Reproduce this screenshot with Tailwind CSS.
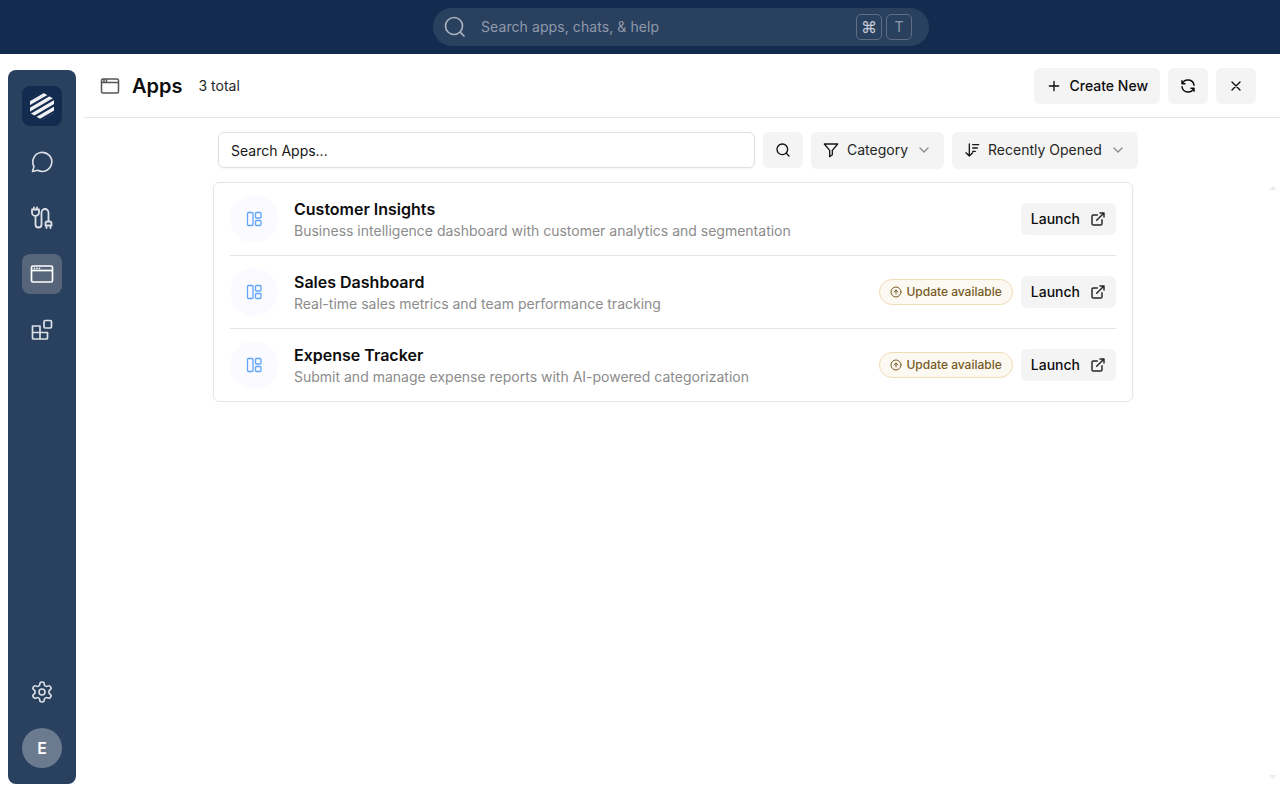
<!doctype html>
<html class="overflow-hidden">
  <head>
    <meta charset="UTF-8" />
    <title>Apps</title>
    <script src="https://cdn.jsdelivr.net/npm/@tailwindcss/browser@4"></script>
  </head>
  <body class="flex h-[800px] w-[1280px] flex-col overflow-hidden bg-white font-['Inter',sans-serif] text-[#0d0d0d]">
    <!-- top bar -->
    <header class="flex h-[54px] shrink-0 items-start justify-center bg-[#132b4f] pl-[82px] pt-2">
      <div class="flex h-[38px] w-[496px] items-center rounded-full bg-[#2a405f] pl-[10px] pr-[17px]">
        <svg class="h-[24px] w-[24px] text-[#a9b2bf]" viewBox="0 0 24 24" fill="none" stroke="currentColor" stroke-width="1.700" stroke-linecap="round"><circle cx="11" cy="11" r="8.500" /><path d="m21 21-3.600-3.600" /></svg>
        <span class="ml-[14px] flex-1 text-sm tracking-[0.08px] text-[#8f9aab]">Search apps, chats, &amp; help</span>
        <span class="flex h-[26px] w-[26px] items-center justify-center rounded-[5px] border border-[#5f6e85] text-base text-[#c4cad3]">⌘</span>
        <span class="ml-[4px] flex h-[26px] w-[26px] items-center justify-center rounded-[5px] border border-[#5f6e85] text-sm text-[#8f9aab]">T</span>
      </div>
    </header>

    <div class="flex min-h-0 flex-1">
      <!-- sidebar -->
      <aside class="mb-4 ml-2 mt-4 flex w-[68px] shrink-0 flex-col items-center rounded-lg bg-[#2a405f] pb-4 pt-4">
        <div class="flex h-10 w-10 items-center justify-center rounded-lg bg-[#132b4f]">
          <svg class="h-[28px] w-[28px]" viewBox="0 0 28 28" fill="none">
            <path d="M14 0 26 7v14l-12 7-12-7V7Z" fill="#eef0f3" />
            <path d="M0 9 28-7.200M0 15.500 28-.700M0 22 28 5.800M0 28.500 28 12.300M0 35 28 18.800" stroke="#132b4f" stroke-width="2.200" />
          </svg>
        </div>
        <div class="mt-4 flex h-10 w-10 items-center justify-center">
          <svg class="h-6 w-6 text-[#dde1e7]" viewBox="0 0 24 24" fill="none" stroke="currentColor" stroke-width="1.600" stroke-linecap="round" stroke-linejoin="round"><path d="M2.500 21.500 4 16.500A9.500 9.500 0 1 1 7.700 20.200Z" /></svg>
        </div>
        <div class="mt-4 flex h-10 w-10 items-center justify-center">
          <svg class="h-6 w-6 text-[#dde1e7]" viewBox="0 0 24 24" fill="none" stroke="currentColor" stroke-width="1.800" stroke-linecap="round" stroke-linejoin="round"><path d="M2 3.500h7v3a3.500 3.500 0 0 1-7 0ZM4 1.500v2M7 1.500v2M5.500 10v8.500a3 3 0 0 0 6 0v-12a3.500 3.500 0 0 1 7 0V15" /><path d="M15.500 19.500v-2a2 2 0 0 1 2-2h2a2 2 0 0 1 2 2v2ZM16.500 19.500v2.500M20.500 19.500v2.500" /></svg>
        </div>
        <div class="mt-4 flex h-10 w-10 items-center justify-center rounded-lg bg-[#566579]">
          <svg class="h-6 w-6 text-white" viewBox="0 0 24 24" fill="none" stroke="currentColor" stroke-width="1.700"><rect x="1.500" y="4" width="21" height="16" rx="1.500" /><path d="M1.500 8.500h21" /><path d="M4.500 6.300h.01M7 6.300h.01M9.500 6.300h.01" stroke-linecap="round" /></svg>
        </div>
        <div class="mt-4 flex h-10 w-10 items-center justify-center">
          <svg class="h-6 w-6 text-[#dde1e7]" viewBox="0 0 24 24" fill="none" stroke="currentColor" stroke-width="1.700" stroke-linejoin="round"><path d="M2.500 8h7.500v13H3.500a1 1 0 0 1-1-1ZM2.500 14.500h15M10 14.500h7.500V20a1 1 0 0 1-1 1H10" /><rect x="14" y="2.500" width="7.500" height="7.500" rx="1.200" /></svg>
        </div>
        <div class="mt-auto flex h-10 w-10 items-center justify-center">
          <svg class="h-6 w-6 text-[#dde1e7]" viewBox="0 0 24 24" fill="none" stroke="currentColor" stroke-width="1.600" stroke-linecap="round" stroke-linejoin="round"><path d="M12.220 2h-.44a2 2 0 0 0-2 2v.18a2 2 0 0 1-1 1.730l-.43.250a2 2 0 0 1-2 0l-.150-.080a2 2 0 0 0-2.730.730l-.220.380a2 2 0 0 0 .730 2.730l.150.100a2 2 0 0 1 1 1.720v.510a2 2 0 0 1-1 1.740l-.150.090a2 2 0 0 0-.730 2.730l.220.380a2 2 0 0 0 2.730.730l.150-.080a2 2 0 0 1 2 0l.430.250a2 2 0 0 1 1 1.730V20a2 2 0 0 0 2 2h.44a2 2 0 0 0 2-2v-.180a2 2 0 0 1 1-1.730l.430-.250a2 2 0 0 1 2 0l.150.080a2 2 0 0 0 2.730-.730l.220-.390a2 2 0 0 0-.730-2.730l-.150-.080a2 2 0 0 1-1-1.740v-.500a2 2 0 0 1 1-1.740l.150-.090a2 2 0 0 0 .730-2.730l-.220-.380a2 2 0 0 0-2.730-.730l-.150.080a2 2 0 0 1-2 0l-.430-.250a2 2 0 0 1-1-1.730V4a2 2 0 0 0-2-2z" /><circle cx="12" cy="12" r="3" /></svg>
        </div>
        <div class="mt-4 flex h-10 w-10 items-center justify-center rounded-full bg-[#6b7a8f] text-base font-semibold text-white">E</div>
      </aside>

      <!-- main -->
      <main class="ml-2 flex min-w-0 flex-1 flex-col">
        <div class="flex h-[64px] shrink-0 items-center border-b border-[#e5e5e5] pl-4 pr-6">
          <svg class="h-[20px] w-[20px] text-[#555555]" viewBox="0 0 20 20" fill="none" stroke="currentColor" stroke-width="1.500"><rect x="1.500" y="3" width="17" height="14" rx="1.500" /><path d="M1.500 6.500h17M4 3v3.500M6.500 3v3.500" /></svg>
          <h1 class="ml-3 text-xl font-semibold">Apps</h1>
          <span class="ml-4 text-sm text-[#262626]">3 total</span>
          <button class="ml-auto flex h-9 items-center gap-2 rounded-md bg-[#f4f4f4] px-3 text-sm font-medium">
            <svg class="h-4 w-4" viewBox="0 0 24 24" fill="none" stroke="currentColor" stroke-width="2" stroke-linecap="round"><path d="M5 12h14M12 5v14" /></svg>
            Create New
          </button>
          <button class="ml-2 flex h-9 w-10 items-center justify-center rounded-md bg-[#f4f4f4]">
            <svg class="h-[18px] w-[18px]" viewBox="0 0 24 24" fill="none" stroke="currentColor" stroke-width="2" stroke-linecap="round" stroke-linejoin="round"><path d="M20 11a8.100 8.100 0 0 0-15.500-2M4 5v4h4M4 13a8.100 8.100 0 0 0 15.500 2M20 19v-4h-4" /></svg>
          </button>
          <button class="ml-2 flex h-9 w-10 items-center justify-center rounded-md bg-[#f4f4f4]">
            <svg class="h-4 w-4" viewBox="0 0 24 24" fill="none" stroke="currentColor" stroke-width="2" stroke-linecap="round"><path d="M18 6 6 18M6 6l12 12" /></svg>
          </button>
        </div>

        <div class="relative min-h-0 flex-1 pr-[18px]">
          <!-- faint scrollbar arrows -->
          <span class="absolute right-[3px] top-[68px] h-0 w-0 border-x-[4px] border-b-[4px] border-x-transparent border-b-[#ececec]"></span>
          <span class="absolute bottom-[21px] right-[3px] h-0 w-0 border-x-[4px] border-t-[4px] border-x-transparent border-t-[#ececec]"></span>

          <div class="mx-auto w-[920px] pt-[14px]">
            <!-- toolbar -->
            <div class="flex items-start whitespace-nowrap pl-[5px]">
              <div class="flex h-9 w-[537px] shrink-0 items-center rounded-md border border-[#e0e0e0] pl-3 pt-[1px] text-sm text-[#171717] shadow-xs">Search Apps...</div>
              <button class="ml-2 flex h-9 w-10 shrink-0 items-center justify-center rounded-md bg-[#f4f4f4]">
                <svg class="h-4 w-4" viewBox="0 0 24 24" fill="none" stroke="currentColor" stroke-width="2" stroke-linecap="round"><circle cx="11" cy="11" r="8" /><path d="m21 21-4.300-4.300" /></svg>
              </button>
              <button class="ml-2 flex h-[37px] shrink-0 items-center rounded-md bg-[#f4f4f4] px-3 pb-[1px] text-sm text-[#262626]">
                <svg class="mr-2 h-[16px] w-[16px]" viewBox="0 0 24 24" fill="none" stroke="#171717" stroke-width="2" stroke-linecap="round" stroke-linejoin="round"><path d="M2 3h20l-8 9.500V19l-4 3v-9.500Z" /></svg>
                Category
                <svg class="ml-2 h-[16px] w-[16px]" viewBox="0 0 24 24" fill="none" stroke="#8c8c8c" stroke-width="2" stroke-linecap="round" stroke-linejoin="round"><path d="m6 9 6 6 6-6" /></svg>
              </button>
              <button class="ml-2 flex h-[37px] shrink-0 items-center rounded-md bg-[#f4f4f4] px-3 pb-[1px] text-sm text-[#262626]">
                <svg class="mr-2 h-[16px] w-[16px]" viewBox="0 0 24 24" fill="none" stroke="#171717" stroke-width="2" stroke-linecap="round" stroke-linejoin="round"><path d="M8 3v18M3 16l5 5 5-5M13 4h9M13 9h7M13 14h4" /></svg>
                Recently Opened
                <svg class="ml-2 h-[16px] w-[16px]" viewBox="0 0 24 24" fill="none" stroke="#8c8c8c" stroke-width="2" stroke-linecap="round" stroke-linejoin="round"><path d="m6 9 6 6 6-6" /></svg>
              </button>
            </div>

            <!-- list -->
            <div class="mt-[13px] rounded-md border border-[#e5e5e5] px-4">
              <div class="flex h-[73px] items-center border-b border-[#e5e5e5]">
                <div class="flex h-12 w-12 items-center justify-center rounded-full bg-[#fafaff]">
                  <svg class="h-4 w-4" viewBox="0 0 16 16" fill="none" stroke="#60a5fa" stroke-width="1.300"><rect x="1.500" y="1.500" width="5.500" height="13" rx="1" /><rect x="9.500" y="1.500" width="5.500" height="5.500" rx="1" /><rect x="9.500" y="9.500" width="5.500" height="5" rx="1" /></svg>
                </div>
                <div class="ml-4 flex-1">
                  <div class="text-base leading-6 font-semibold">Customer Insights</div>
                  <div class="text-sm leading-5 text-[#8c8c8c]">Business intelligence dashboard with customer analytics and segmentation</div>
                </div>
                <button class="flex h-8 items-center rounded-md bg-[#f4f4f4] px-[10px] text-sm font-medium">
                  Launch
                  <svg class="ml-[10px] h-4 w-4" viewBox="0 0 24 24" fill="none" stroke="#262626" stroke-width="2.200" stroke-linecap="round" stroke-linejoin="round"><path d="M18 13v6a2 2 0 0 1-2 2H5a2 2 0 0 1-2-2V8a2 2 0 0 1 2-2h6M15 3h6v6M10 14 21 3" /></svg>
                </button>
              </div>
              <div class="flex h-[73px] items-center border-b border-[#e5e5e5]">
                <div class="flex h-12 w-12 items-center justify-center rounded-full bg-[#fafaff]">
                  <svg class="h-4 w-4" viewBox="0 0 16 16" fill="none" stroke="#60a5fa" stroke-width="1.300"><rect x="1.500" y="1.500" width="5.500" height="13" rx="1" /><rect x="9.500" y="1.500" width="5.500" height="5.500" rx="1" /><rect x="9.500" y="9.500" width="5.500" height="5" rx="1" /></svg>
                </div>
                <div class="ml-4 flex-1">
                  <div class="text-base leading-6 font-semibold">Sales Dashboard</div>
                  <div class="text-sm leading-5 text-[#8c8c8c]">Real-time sales metrics and team performance tracking</div>
                </div>
                <span class="mr-2 flex h-[26px] items-center gap-1 rounded-full border border-[#efdcb4] bg-[#fcf9f2] px-[10px] text-xs font-medium text-[#76591f]">
                  <svg class="h-3 w-3" viewBox="0 0 24 24" fill="none" stroke="currentColor" stroke-width="2" stroke-linecap="round" stroke-linejoin="round"><circle cx="12" cy="12" r="10" /><path d="m16 12-4-4-4 4M12 16V8" /></svg>
                  Update available
                </span>
                <button class="flex h-8 items-center rounded-md bg-[#f4f4f4] px-[10px] text-sm font-medium">
                  Launch
                  <svg class="ml-[10px] h-4 w-4" viewBox="0 0 24 24" fill="none" stroke="#262626" stroke-width="2.200" stroke-linecap="round" stroke-linejoin="round"><path d="M18 13v6a2 2 0 0 1-2 2H5a2 2 0 0 1-2-2V8a2 2 0 0 1 2-2h6M15 3h6v6M10 14 21 3" /></svg>
                </button>
              </div>
              <div class="flex h-[72px] items-center">
                <div class="flex h-12 w-12 items-center justify-center rounded-full bg-[#fafaff]">
                  <svg class="h-4 w-4" viewBox="0 0 16 16" fill="none" stroke="#60a5fa" stroke-width="1.300"><rect x="1.500" y="1.500" width="5.500" height="13" rx="1" /><rect x="9.500" y="1.500" width="5.500" height="5.500" rx="1" /><rect x="9.500" y="9.500" width="5.500" height="5" rx="1" /></svg>
                </div>
                <div class="ml-4 flex-1">
                  <div class="text-base leading-6 font-semibold">Expense Tracker</div>
                  <div class="text-sm leading-5 text-[#8c8c8c]">Submit and manage expense reports with AI-powered categorization</div>
                </div>
                <span class="mr-2 flex h-[26px] items-center gap-1 rounded-full border border-[#efdcb4] bg-[#fcf9f2] px-[10px] text-xs font-medium text-[#76591f]">
                  <svg class="h-3 w-3" viewBox="0 0 24 24" fill="none" stroke="currentColor" stroke-width="2" stroke-linecap="round" stroke-linejoin="round"><circle cx="12" cy="12" r="10" /><path d="m16 12-4-4-4 4M12 16V8" /></svg>
                  Update available
                </span>
                <button class="flex h-8 items-center rounded-md bg-[#f4f4f4] px-[10px] text-sm font-medium">
                  Launch
                  <svg class="ml-[10px] h-4 w-4" viewBox="0 0 24 24" fill="none" stroke="#262626" stroke-width="2.200" stroke-linecap="round" stroke-linejoin="round"><path d="M18 13v6a2 2 0 0 1-2 2H5a2 2 0 0 1-2-2V8a2 2 0 0 1 2-2h6M15 3h6v6M10 14 21 3" /></svg>
                </button>
              </div>
            </div>
          </div>
        </div>
      </main>
    </div>
  </body>
</html>
